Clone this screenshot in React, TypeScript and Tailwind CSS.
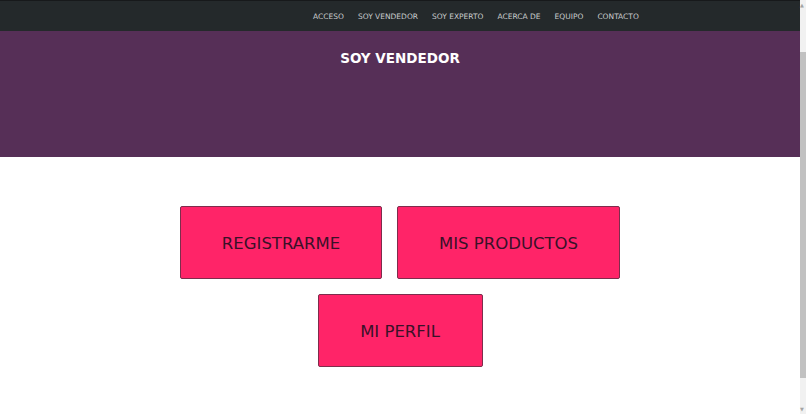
const NAV = ["ACCESO", "SOY VENDEDOR", "SOY EXPERTO", "ACERCA DE", "EQUIPO", "CONTACTO"];

function ActionButton({ label, width }: { label: string; width: string }) {
  return (
    <button
      className={`flex h-[73px] ${width} items-center justify-center rounded-[2px] border border-[#7d2d4c] bg-[#ff2468] pt-[3px] text-[16.5px] text-[#3a1128]`}
    >
      {label}
    </button>
  );
}

export default function App() {
  return (
    <div className="flex h-[414px] w-full overflow-hidden bg-white font-['DejaVu_Sans',sans-serif]">
      <div className="flex-1">
        {/* barra de navegación */}
        <nav className="flex h-[31px] items-center border-t border-[#17191b] bg-[#24292b] pl-[313px] pt-[2px]">
          <ul className="flex gap-[14px] text-[7.5px] text-[#c9cccd]">
            {NAV.map((n) => (
              <li key={n}>{n}</li>
            ))}
          </ul>
        </nav>

        {/* cabecera */}
        <header className="h-[126px] bg-[#562f57] pt-[17px] text-center">
          <h1 className="text-[13.5px] font-bold text-white">SOY VENDEDOR</h1>
        </header>

        {/* botones */}
        <div className="flex flex-col items-center gap-[15px] pt-[49px]">
          <div className="flex gap-[15px]">
            <ActionButton label="REGISTRARME" width="w-[202px]" />
            <ActionButton label="MIS PRODUCTOS" width="w-[223px]" />
          </div>
          <ActionButton label="MI PERFIL" width="w-[165px]" />
        </div>
      </div>

      {/* barra de desplazamiento */}
      <div className="flex w-[6px] flex-col bg-[#f1f1f1]">
        <div className="h-[10px] text-[5px] leading-[10px] text-[#a3a3a3]">▲</div>
        <div className="mt-[42px] h-[326px] bg-[#c1c1c1]" />
        <div className="flex-1" />
        <div className="h-[10px] text-[5px] leading-[10px] text-[#a3a3a3]">▼</div>
      </div>
    </div>
  );
}
